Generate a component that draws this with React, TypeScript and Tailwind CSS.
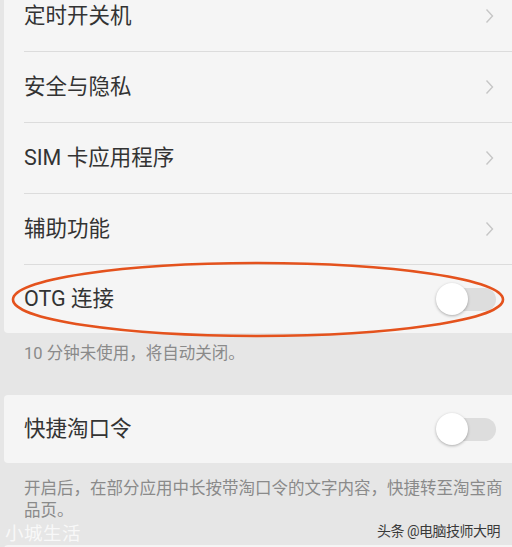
import React from "react";

const Chevron = () => (
  <svg width="9" height="16" viewBox="0 0 9 16" fill="none">
    <polyline points="1.5,1.5 7.5,8 1.5,14.5" stroke="#c6c6c6" strokeWidth="1.4" />
  </svg>
);

const Toggle = () => (
  <div className="relative w-[60px] h-[32px] flex items-center">
    <div className="ml-[4px] w-[56px] h-[23px] rounded-full bg-[#dddddd]" />
    <div className="absolute left-0 top-[0px] w-[32px] h-[32px] rounded-full bg-white shadow-[0_1px_3px_rgba(0,0,0,0.3)]" />
  </div>
);

const Row = ({ label }: { label: string }) => (
  <div className="pl-[20px]">
    <div className="h-[71px] flex items-center justify-between pr-[18px] border-b border-[#dcdcdc]">
      <span className="text-[21.5px] text-[#333333] leading-none">{label}</span>
      <Chevron />
    </div>
  </div>
);

const SwitchRow = ({ label }: { label: string }) => (
  <div className="pl-[20px]">
    <div className="h-[68px] flex items-center justify-between pr-[16px]">
      <span className="text-[21.5px] text-[#333333] leading-none">{label}</span>
      <Toggle />
    </div>
  </div>
);

export default function App() {
  return (
    <div
      className="relative w-[512px] h-[547px] overflow-hidden bg-[#e6e6e6]"
      style={{ fontFamily: 'Roboto, "Noto Sans CJK SC", sans-serif' }}
    >
      {/* Settings card */}
      <div className="ml-[4px] -mt-[19px] bg-[#f5f5f5] rounded-bl-[4px]">
        <Row label="定时开关机" />
        <Row label="安全与隐私" />
        <Row label="SIM 卡应用程序" />
        <Row label="辅助功能" />
        <SwitchRow label="OTG 连接" />
      </div>
      <div className="pl-[24px] pt-[10px] pb-[30px] text-[16.5px] leading-[22px] text-[#8a8a8a]">
        10 分钟未使用，将自动关闭。
      </div>

      <div className="ml-[4px] bg-[#f5f5f5] rounded-l-[4px]">
        <SwitchRow label="快捷淘口令" />
      </div>
      <div className="pl-[24px] pr-0 pt-[15px] text-[16.5px] leading-[22px] text-[#8a8a8a]">
        开启后，在部分应用中长按带淘口令的文字内容，快捷转至淘宝商品页。
      </div>

      <div className="absolute left-[4px] right-0 top-[545px] h-[10px] bg-[#f5f5f5] rounded-tl-[4px]" />

      {/* watermarks */}
      <div className="absolute left-[5px] top-[522px] text-[18.5px] leading-[24px] text-white/75 tracking-[0.5px]">
        小城生活
      </div>
      <div className="absolute right-[12px] top-[521px] text-[14px] leading-[20px] tracking-[-0.5px] text-[#3a3a3a]">
        头条 @电脑技师大明
      </div>

      {/* annotation */}
      <svg className="absolute left-0 top-0 pointer-events-none" width="512" height="547">
        <ellipse cx="258" cy="299.5" rx="245" ry="36.5" fill="none" stroke="#e4521d" strokeWidth="2.6" />
      </svg>
    </div>
  );
}
